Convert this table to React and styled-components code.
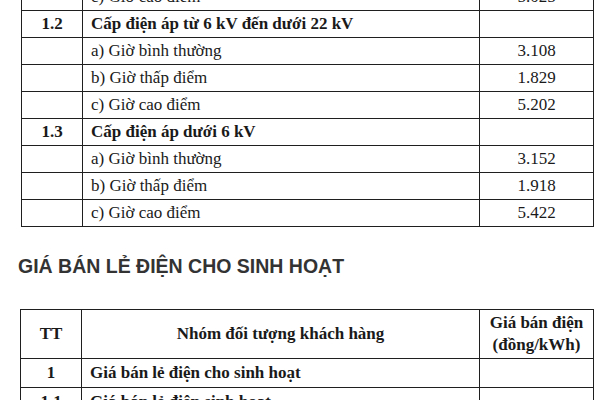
import React from "react";
import styled, { createGlobalStyle } from "styled-components";

const GlobalStyle = createGlobalStyle`
  html, body {
    margin: 0;
    padding: 0;
    background: #ffffff;
  }
  body {
    width: 600px;
    height: 400px;
    overflow: hidden;
  }
`;

const Page = styled.div`
  width: 600px;
  height: 400px;
  overflow: hidden;
  display: flex;
  flex-direction: column;
  background: #fff;
  color: #1a1a1a;
  font-family: "Liberation Serif", "Times New Roman", serif;
`;

const Table = styled.table`
  border-collapse: collapse;
  table-layout: fixed;
  width: ${(p) => p.$width}px;
  margin-left: ${(p) => p.$left}px;
  margin-top: ${(p) => p.$top || 0}px;
  font-size: 17px;
`;

const Row = styled.tr`
  height: ${(p) => p.$h || 27}px;
`;

const Cell = styled.td`
  border: 1.5px solid #1f1f1f;
  padding: 0 8px;
  vertical-align: middle;
  text-align: ${(p) => p.$align || "left"};
  font-weight: ${(p) => (p.$bold ? 700 : 400)};
  line-height: 20px;
  white-space: nowrap;
  overflow: hidden;
`;

const HeadCell = styled.th`
  border: 1.5px solid #1f1f1f;
  padding: 0 6px;
  vertical-align: middle;
  text-align: center;
  font-weight: 700;
  line-height: 22px;
`;

const Title = styled.h2`
  margin: 28px 0 0 18px;
  font-family: "Liberation Sans", Arial, sans-serif;
  font-size: 19.5px;
  line-height: 23px;
  font-weight: 700;
  color: #333;
  letter-spacing: 0;
`;

const Cols = ({ widths }) => (
  <colgroup>
    {widths.map((w, i) => (
      <col key={i} style={{ width: w }} />
    ))}
  </colgroup>
);

const groups = [
  {
    tt: "1.2",
    name: "Cấp điện áp từ 6 kV đến dưới 22 kV",
    items: [
      ["a) Giờ bình thường", "3.108"],
      ["b) Giờ thấp điểm", "1.829"],
      ["c) Giờ cao điểm", "5.202"],
    ],
  },
  {
    tt: "1.3",
    name: "Cấp điện áp dưới 6 kV",
    items: [
      ["a) Giờ bình thường", "3.152"],
      ["b) Giờ thấp điểm", "1.918"],
      ["c) Giờ cao điểm", "5.422"],
    ],
  },
];

const App = () => {
  return (
    <Page>
      <GlobalStyle />
      <Table $width={572} $left={21} $top={-17}>
        <Cols widths={[61, 397, 114]} />
        <tbody>
          <Row>
            <Cell />
            <Cell>c) Giờ cao điểm</Cell>
            <Cell $align="center">5.025</Cell>
          </Row>
          {groups.map((g) => (
            <React.Fragment key={g.tt}>
              <Row>
                <Cell $align="center" $bold>
                  {g.tt}
                </Cell>
                <Cell $bold>{g.name}</Cell>
                <Cell />
              </Row>
              {g.items.map(([label, price]) => (
                <Row key={label}>
                  <Cell />
                  <Cell>{label}</Cell>
                  <Cell $align="center">{price}</Cell>
                </Row>
              ))}
            </React.Fragment>
          ))}
        </tbody>
      </Table>

      <Title>GIÁ BÁN LẺ ĐIỆN CHO SINH HOẠT</Title>

      <Table $width={573} $left={20} $top={31}>
        <Cols widths={[61, 398, 114]} />
        <thead>
          <Row $h={49}>
            <HeadCell>TT</HeadCell>
            <HeadCell>Nhóm đối tượng khách hàng</HeadCell>
            <HeadCell>
              Giá bán điện
              <br />
              (đồng/kWh)
            </HeadCell>
          </Row>
        </thead>
        <tbody>
          <Row $h={29}>
            <Cell $align="center" $bold>
              1
            </Cell>
            <Cell $bold>Giá bán lẻ điện cho sinh hoạt</Cell>
            <Cell />
          </Row>
          <Row $h={29}>
            <Cell $align="center" $bold>
              1.1
            </Cell>
            <Cell $bold>Giá bán lẻ điện sinh hoạt</Cell>
            <Cell />
          </Row>
        </tbody>
      </Table>
    </Page>
  );
};

export default App;
